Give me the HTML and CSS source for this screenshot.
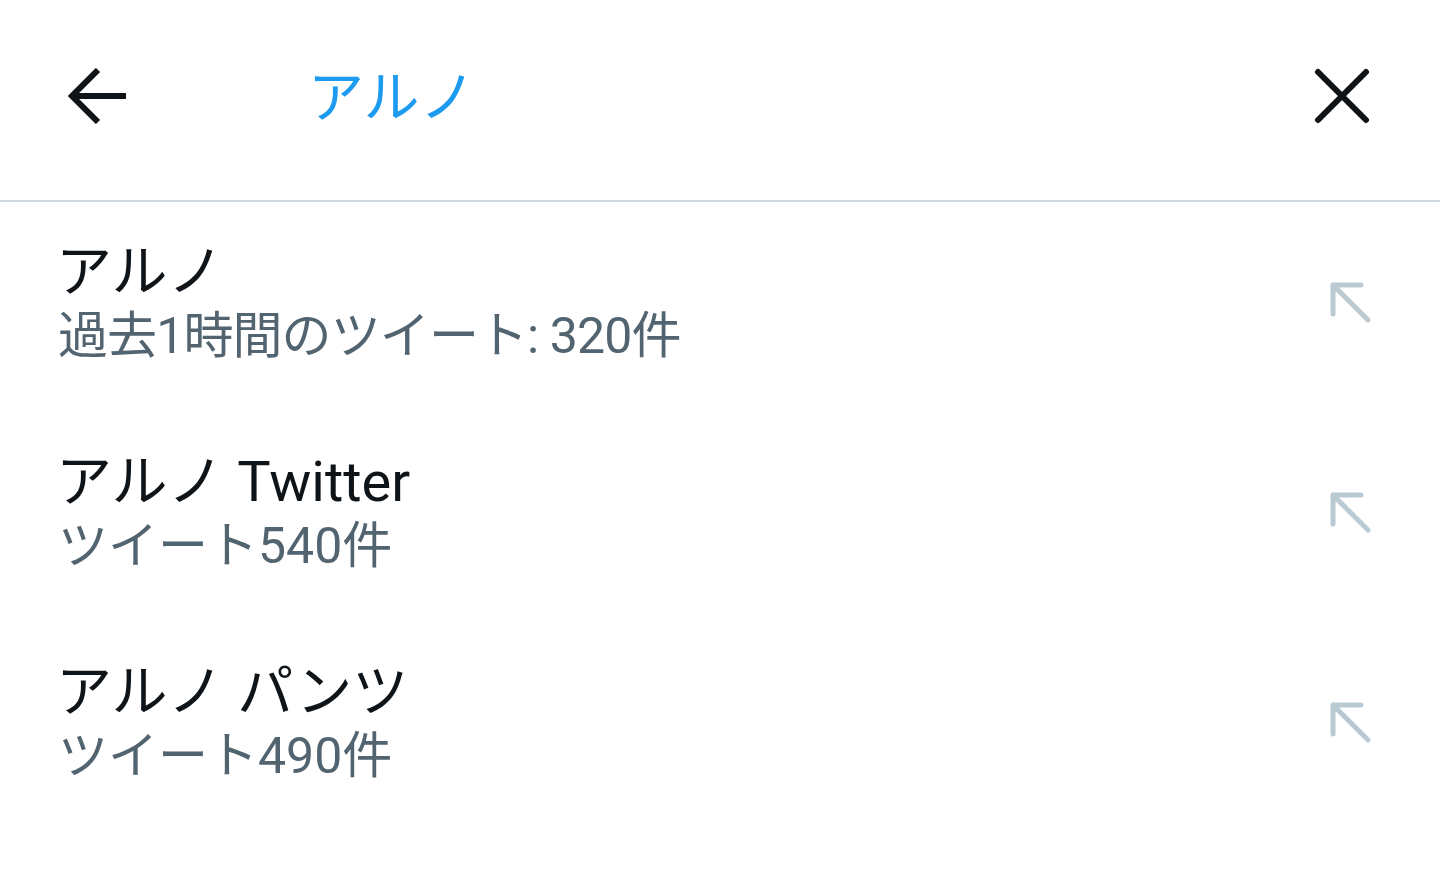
FILE: index.html
```html
<!DOCTYPE html>
<html lang="ja">
<head>
<meta charset="utf-8">
<link rel="stylesheet" href="styles.css">
</head>
<body>
<header class="bar">
  <button class="icon-btn back" aria-label="戻る">
    <svg width="60" height="56" viewBox="0 0 60 56"><path d="M3 28 H58 M30 2 L4 28 L30 54" fill="none" stroke="#0f1419" stroke-width="6" stroke-linejoin="miter"/></svg>
  </button>
  <div class="query">アルノ</div>
  <button class="icon-btn close" aria-label="閉じる">
    <svg width="56" height="56" viewBox="0 0 56 56"><path d="M4 4 L52 52 M52 4 L4 52" fill="none" stroke="#0f1419" stroke-width="6" stroke-linecap="round"/></svg>
  </button>
</header>
<ul class="list">
  <li class="item">
    <div class="texts">
      <div class="title">アルノ</div>
      <div class="sub tight">過去1時間のツイート: 320件</div>
    </div>
    <svg class="fill" width="44" height="44" viewBox="0 0 44 44"><path d="M5 34 V5 H33 M5 5 L40 40" fill="none" stroke="#b9cad3" stroke-width="5" stroke-linecap="round" stroke-linejoin="round"/></svg>
  </li>
  <li class="item">
    <div class="texts">
      <div class="title">アルノ Twitter</div>
      <div class="sub">ツイート540件</div>
    </div>
    <svg class="fill" width="44" height="44" viewBox="0 0 44 44"><path d="M5 34 V5 H33 M5 5 L40 40" fill="none" stroke="#b9cad3" stroke-width="5" stroke-linecap="round" stroke-linejoin="round"/></svg>
  </li>
  <li class="item">
    <div class="texts">
      <div class="title">アルノ パンツ</div>
      <div class="sub">ツイート490件</div>
    </div>
    <svg class="fill" width="44" height="44" viewBox="0 0 44 44"><path d="M5 34 V5 H33 M5 5 L40 40" fill="none" stroke="#b9cad3" stroke-width="5" stroke-linecap="round" stroke-linejoin="round"/></svg>
  </li>
</ul>
</body>
</html>
```

FILE: styles.css
```css
* { box-sizing: border-box; }
html, body { margin: 0; padding: 0; background: #fff; }
body {
  width: 1440px;
  height: 884px;
  overflow: hidden;
  font-family: Roboto, "Noto Sans CJK JP", sans-serif;
}
.bar {
  height: 202px;
  border-bottom: 2px solid #cfd9de;
  display: flex;
  align-items: center;
  padding: 0 70px 8px 68px;
}
.icon-btn {
  background: none;
  border: 0;
  padding: 0;
  display: flex;
}
.back { margin-right: 180px; }
.query {
  flex: 1;
  color: #1d9bf0;
  font-size: 56px;
  line-height: 64px;
  padding-top: 4px;
}
.list { list-style: none; margin: 0; padding: 0; }
.item {
  height: 210px;
  display: flex;
  align-items: center;
  padding: 0 68px 10px 58px;
}
.texts { flex: 1; }
.title {
  color: #0f1419;
  font-size: 56px;
  line-height: 64px;
  padding-top: 4px;
  margin-left: -2px;
}
.sub {
  color: #536471;
  font-size: 50px;
  line-height: 64px;
}
.sub.tight { letter-spacing: -0.9px; }
.fill { display: block; }
```
